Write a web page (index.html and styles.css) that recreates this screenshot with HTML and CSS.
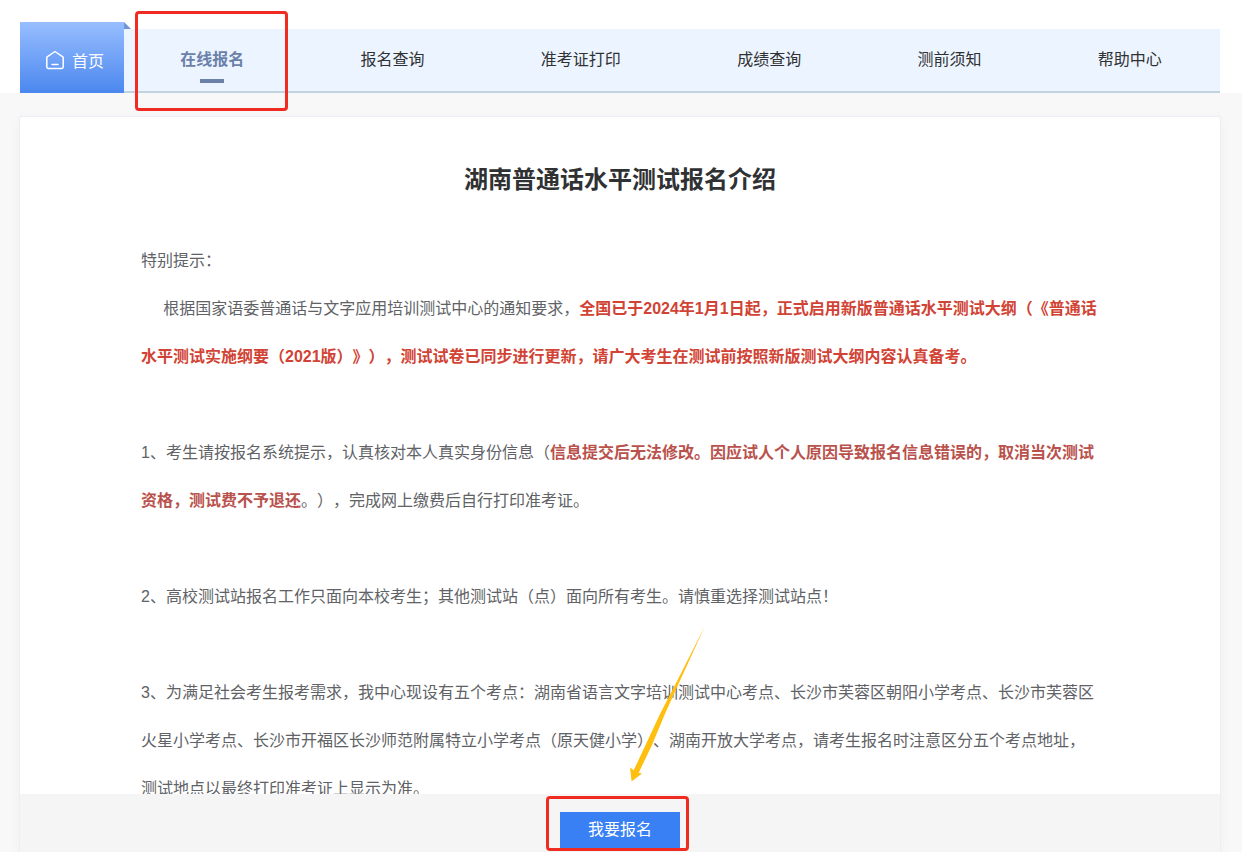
FILE: index.html
```
<!DOCTYPE html>
<html lang="zh-CN">
<head>
    <meta charset="UTF-8">
    <meta name="viewport" content="width=device-width, initial-scale=1.0">
    <title>湖南普通话水平测试报名介绍</title>
    <link rel="stylesheet" href="styles.css">
</head>
<body>
    <header class="header">
        <nav class="nav">
            <a class="home" href="#">
                <svg class="home-icon" width="20" height="20" viewBox="0 0 20 20" fill="none" stroke="#fff" stroke-width="1.5" stroke-linecap="round" stroke-linejoin="round">
                    <path d="M1.8 7.2 L10 1.5 L18.2 7.2 V17 Q18.2 18.4 16.8 18.4 H3.2 Q1.8 18.4 1.8 17 Z"/>
                    <path d="M7 14.5 H13"/>
                </svg>
                <span>首页</span>
            </a>
            <ul class="menu">
                <li><a class="active" href="#">在线报名</a></li>
                <li><a href="#">报名查询</a></li>
                <li><a href="#">准考证打印</a></li>
                <li><a href="#">成绩查询</a></li>
                <li><a href="#">测前须知</a></li>
                <li><a href="#">帮助中心</a></li>
            </ul>
        </nav>
        <div class="mark mark-menu"></div>
    </header>

    <main class="card">
        <div class="content">
            <h1>湖南普通话水平测试报名介绍</h1>
            <p>特别提示：</p>
            <p>&nbsp;&nbsp;&nbsp;&nbsp;&nbsp;根据国家语委普通话与文字应用培训测试中心的通知要求，<strong class="red">全国已于2024年1月1日起，正式启用新版普通话水平测试大纲（《普通话水平测试实施纲要（2021版）》），测试试卷已同步进行更新，请广大考生在测试前按照新版测试大纲内容认真备考。</strong></p>
            <br>
            <p>1、考生请按报名系统提示，认真核对本人真实身份信息（<strong class="dark-red">信息提交后无法修改。因应试人个人原因导致报名信息错误的，取消当次测试资格，测试费不予退还</strong>。），完成网上缴费后自行打印准考证。</p>
            <br>
            <p>2、高校测试站报名工作只面向本校考生；其他测试站（点）面向所有考生。请慎重选择测试站点！</p>
            <br>
            <p>3、为满足社会考生报考需求，我中心现设有五个考点：湖南省语言文字培训测试中心考点、长沙市芙蓉区朝阳小学考点、长沙市芙蓉区火星小学考点、长沙市开福区长沙师范附属特立小学考点（原天健小学）、湖南开放大学考点，请考生报名时注意区分五个考点地址，测试地点以最终打印准考证上显示为准。</p>
        </div>
        <div class="footer">
            <button class="apply" type="button">我要报名</button>
            <div class="mark mark-apply"></div>
            <svg class="arrow" width="76" height="158" viewBox="0 0 76 158">
                <path d="M75 2 L45.5 60 L30 90 L16 120 L3.7 146.3 L0 143.5 L1.6 157.5 L12 149.5 L8.7 148.7 L22 121 L34.5 91 L48 61 Z" fill="#ffbf0f"/>
            </svg>
        </div>
    </main>
</body>
</html>
```
FILE: styles.css
```
* {
    margin: 0;
    padding: 0;
    box-sizing: border-box;
}

body {
    height: 852px;
    overflow: hidden;
    display: flex;
    flex-direction: column;
    font-family: "Liberation Sans", "Noto Sans CJK SC", sans-serif;
    font-size: 16px;
    color: #606266;
    background: #f8f8f8;
    text-spacing-trim: space-all;
}

a {
    color: inherit;
    text-decoration: none;
}

.header {
    position: relative;
    height: 93px;
    padding: 22px 22px 0 20px;
    background: #fff;
}

.nav {
    display: flex;
    align-items: flex-end;
    height: 71px;
}

.home {
    position: relative;
    display: flex;
    align-items: center;
    justify-content: center;
    gap: 7px;
    width: 104px;
    height: 71px;
    padding: 4px 0 0 5px;
    color: #fff;
    background: linear-gradient(180deg, #98beff, #4a87ee);
}

/* folded corner */
.home::after {
    content: "";
    position: absolute;
    left: 100%;
    top: 0;
    border-bottom: 7px solid #7096d8;
    border-right: 7px solid transparent;
}

.menu {
    flex: 1;
    display: flex;
    height: 64px;
    list-style: none;
    color: #303133;
    background: #ecf5ff;
    border-bottom: 2px solid #c2d3e0;
}

.menu li {
    flex: 1 1 auto;
    text-align: center;
    line-height: 62px;
}

.menu li:first-child {
    margin-left: -2px;
}

.menu .active {
    position: relative;
    display: inline-block;
    font-weight: bold;
    color: #6b81a9;
}

.menu .active::after {
    content: "";
    position: absolute;
    left: 50%;
    top: 50px;
    width: 24px;
    height: 4px;
    margin-left: -12px;
    background: #6b81a9;
}

.card {
    flex: 1;
    display: flex;
    flex-direction: column;
    width: 1202px;
    min-height: 0;
    margin: 23px 0 0 19px;
    background: #fff;
    border: 1px solid #ebeef5;
    border-bottom: none;
    border-radius: 4px 4px 0 0;
    box-shadow: 0 2px 12px rgba(0, 0, 0, 0.04);
}

.content {
    flex: 1;
    min-height: 0;
    padding: 40px 121px 0;
    line-height: 48px;
    overflow: hidden;
}

h1 {
    height: 80px;
    font-size: 24px;
    line-height: 46px;
    text-align: center;
    color: #303133;
}

.red {
    color: #d14334;
}

.dark-red {
    color: #b9524c;
}

.footer {
    position: relative;
    height: 58px;
    padding-top: 18px;
    text-align: center;
    background: #f5f5f5;
}

.apply {
    display: block;
    width: 120px;
    height: 36px;
    margin: 0 auto;
    font: inherit;
    line-height: 36px;
    color: #fff;
    background: #3880f3;
    border: none;
}

/* hand-drawn style highlights over the page */
.mark {
    position: absolute;
    border: 3px solid #f02b21;
    border-radius: 4px;
}

.mark-menu {
    left: 135px;
    top: 11px;
    width: 153px;
    height: 100px;
    z-index: 1;
}

.mark-apply {
    left: 526px;
    top: 2px;
    width: 143px;
    height: 55px;
}

.arrow {
    position: absolute;
    left: 610px;
    top: -170px;
}
```
